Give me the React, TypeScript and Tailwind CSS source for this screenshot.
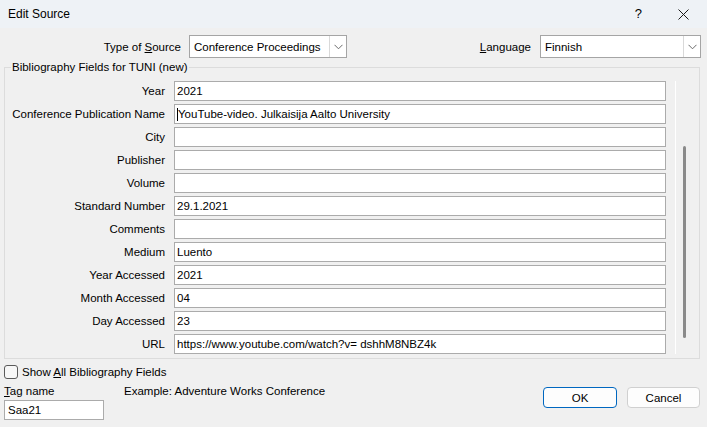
import React from "react";

const fields: { label: string; value: string; caret?: boolean }[] = [
  { label: "Year", value: "2021" },
  { label: "Conference Publication Name", value: "YouTube-video. Julkaisija Aalto University", caret: true },
  { label: "City", value: "" },
  { label: "Publisher", value: "" },
  { label: "Volume", value: "" },
  { label: "Standard Number", value: "29.1.2021" },
  { label: "Comments", value: "" },
  { label: "Medium", value: "Luento" },
  { label: "Year Accessed", value: "2021" },
  { label: "Month Accessed", value: "04" },
  { label: "Day Accessed", value: "23" },
  { label: "URL", value: "https://www.youtube.com/watch?v= dshhM8NBZ4k" },
];

const Chevron: React.FC = () => (
  <svg width="9" height="6" viewBox="0 0 9 6" fill="none">
    <path d="M0.5 0.8 L4.5 4.8 L8.5 0.8" stroke="#6b6b6b" strokeWidth="1" />
  </svg>
);

const Combo: React.FC<{ value: string; width: string }> = ({ value, width }) => (
  <div className={`flex h-[23px] items-stretch border border-[#a5a5a5] bg-white ${width}`}>
    <div className="flex flex-1 items-center whitespace-nowrap pl-[4px]">{value}</div>
    <div className="flex w-[17px] items-center justify-center border-l border-[#d9d9d9]">
      <Chevron />
    </div>
  </div>
);

export default function App() {
  return (
    <div
      className="flex h-[427px] w-[707px] flex-col overflow-hidden whitespace-nowrap bg-[#f0f0f0] text-[11.5px] leading-[16px] text-black"
      style={{ fontFamily: '"Segoe UI", "Liberation Sans", sans-serif' }}
    >
      {/* title bar */}
      <div className="flex h-[28px] items-center bg-[#eef2f6] pl-[8px] text-[12px]">
        <span className="flex-1">Edit Source</span>
        <span className="mr-[36px] text-[13px]">?</span>
        <svg width="11" height="11" viewBox="0 0 11 11" className="mr-[18px]">
          <path d="M0.5 0.5 L10.5 10.5 M10.5 0.5 L0.5 10.5" stroke="#1a1a1a" strokeWidth="1" />
        </svg>
      </div>

      {/* source type / language */}
      <div className="mt-[7px] flex items-center">
        <div className="w-[181px] text-right">
          Type of <span className="underline">S</span>ource
        </div>
        <div className="ml-[8px]">
          <Combo value="Conference Proceedings" width="w-[158px]" />
        </div>
        <div className="flex-1" />
        <div>
          <span className="underline">L</span>anguage
        </div>
        <div className="ml-[9px] mr-[6px]">
          <Combo value="Finnish" width="w-[161px]" />
        </div>
      </div>

      {/* fields group */}
      <fieldset className="ml-[4px] mt-[1px] w-[696px] border border-[#dcdcdc] pb-[4px]">
        <legend className="ml-[6px] px-[1px]">Bibliography Fields for TUNI (new)</legend>
        <div className="flex pt-[6px]">
          <div className="flex w-[661px] flex-col gap-[3px]">
            {fields.map((f) => (
              <div key={f.label} className="flex h-[20px] items-center">
                <div className="w-[160px] text-right">{f.label}</div>
                <div className="ml-[9px] flex h-[20px] w-[492px] items-center border border-[#ababab] bg-white pl-[2px]">
                  {f.caret && <span className="h-[13px] w-[1px] bg-black" />}
                  <span>{f.value}</span>
                </div>
              </div>
            ))}
          </div>
          <div className="ml-[9px] w-[24px] border-l border-white">
            <div className="ml-[7px] mt-[65px] h-[192px] w-[3px] rounded-[2px] bg-[#8a8a8a]" />
          </div>
        </div>
      </fieldset>

      {/* bottom area */}
      <div className="flex">
        <div className="flex flex-1 flex-col pl-[4px]">
          <div className="mt-[5px] flex h-[16px] items-center">
            <div className="h-[14px] w-[14px] rounded-[3px] border border-[#5a5a5a] bg-[#f7f7f7]" />
            <span className="ml-[4px]">
              Show <span className="underline">A</span>ll Bibliography Fields
            </span>
          </div>
          <div className="mt-[3px] flex h-[16px] items-center">
            <span className="w-[120px]">
              <span className="underline">T</span>ag name
            </span>
            <span>Example: Adventure Works Conference</span>
          </div>
          <div className="mt-[1px] flex h-[20px] w-[100px] items-center border border-[#ababab] bg-white pl-[3px]">
            Saa21
          </div>
        </div>
        <div className="mr-[7px] mt-[28px] flex gap-[10px]">
          <button className="h-[21px] w-[74px] rounded-[4px] border border-[#0067c0] bg-[#fdfdfd]">OK</button>
          <button className="h-[21px] w-[73px] rounded-[4px] border border-[#d0d0d0] bg-[#fdfdfd]">Cancel</button>
        </div>
      </div>
    </div>
  );
}
